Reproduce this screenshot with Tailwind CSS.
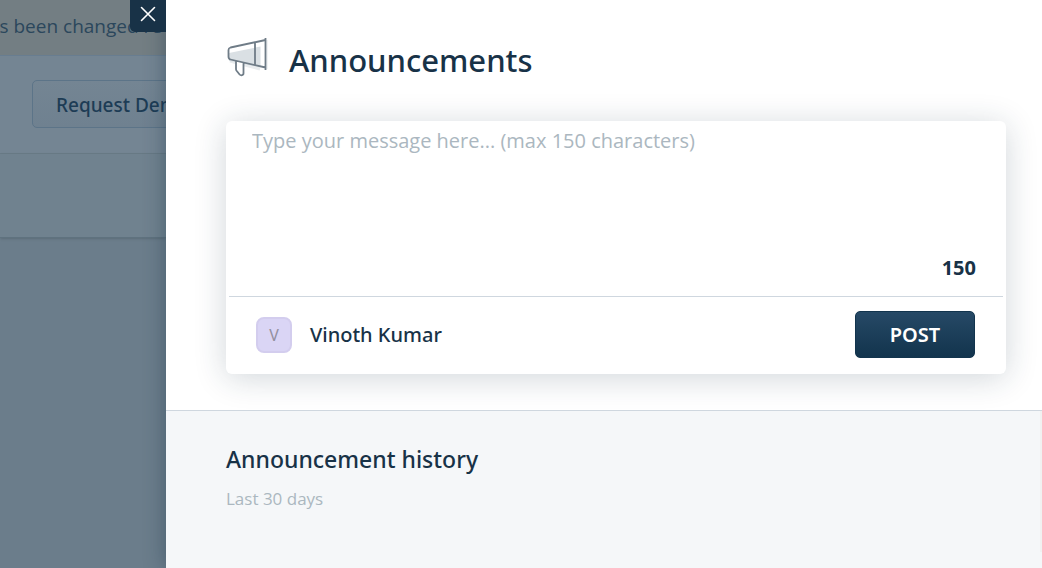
<!DOCTYPE html>
<html lang="en">
<head>
    <meta charset="UTF-8">
    <meta name="viewport" content="width=device-width, initial-scale=1.0">
    <title>Announcements</title>
    <script src="https://cdn.jsdelivr.net/npm/@tailwindcss/browser@4"></script>
</head>
<body class="flex min-h-screen overflow-x-hidden bg-[#6b7d8b] font-['Noto_Sans','Open_Sans',sans-serif] text-[#183247]">

    <!-- Dimmed page behind the drawer -->
    <div class="w-[166px] shrink-0 overflow-hidden whitespace-nowrap text-[19px] text-[#1d3c55]">
        <div class="flex h-14 items-center justify-end border-b border-[#687d90] bg-[#737e83]">
            <p class="pr-1 pb-0.5 font-['Open_Sans',sans-serif] text-[#2b475c]">Your plan has been changed re</p>
        </div>
        <div class="h-[98px] border-b border-[#697b87] bg-[#748593] py-6 pl-8">
            <button type="button" class="h-12 w-48 rounded-[5px] border border-[#5c7488] bg-linear-to-b from-[#748593] to-[#6f8190] pt-0.5 pl-[23px] text-left font-medium">Request Demo</button>
        </div>
        <div class="h-[84px] border-b border-[#5f727f] bg-[#70828f] shadow-sm"></div>
    </div>

    <!-- Drawer -->
    <main class="relative flex grow flex-col bg-white shadow-[0_0_20px_rgba(24,50,71,0.45)]">
        <button type="button" aria-label="Close" class="absolute top-0 right-full flex h-8 w-9 items-center justify-center rounded-bl-[5px] bg-[#183247]">
            <svg class="-mt-1 h-4 w-4" viewBox="0 0 16 16" fill="none" stroke="#fff" stroke-width="1.6" stroke-linecap="round">
                <path d="M1.5 1.5l13 13M14.5 1.5l-13 13"/>
            </svg>
        </button>

        <section class="px-9 pt-9 pb-9 pl-[60px]">
            <header class="mb-9 flex h-[49px] gap-[19px]">
                <svg class="h-11 w-11" viewBox="0 0 44 44" fill="none" stroke="#6f7c87" stroke-width="2" stroke-linejoin="round">
                    <path d="M4 25L34 33" stroke="#e9ecee" stroke-width="3"/>
                    <path d="M41 4v29" stroke="#e3e7ea" stroke-width="1"/>
                    <path d="M3 17l31.500-6.500v21L3 25z" fill="#dae0e4" stroke="none"/>
                    <path d="M11 26h6v12l-3 1-3-5z" fill="#fff" stroke="none"/>
                    <path d="M39.500 4L4.500 11.500Q2.500 12 2.500 14v6.500Q2.500 23 4.500 23.500L39.500 31.500M29 7v22M39.500 2v32M10 25v8q0 1 .6 1.800l3 3.700q.7.800 2 .8 1.900-.2 1.900-2V27" stroke-width="1.8"/>
                </svg>
                <h1 class="text-[31px] leading-[48px] font-medium">Announcements</h1>
            </header>

            <form class="rounded-md bg-white px-[3px] shadow-[0_4px_32px_rgba(24,50,71,0.2)]">
                <div class="border-b border-[#cfd7df] px-[23px] pt-1 pb-3">
                    <textarea aria-label="Message" maxlength="150" placeholder="Type your message here... (max 150 characters)" class="block h-[127px] w-full resize-none font-['Open_Sans',sans-serif] text-xl leading-8 outline-none placeholder:text-[#abb7c0]"></textarea>
                    <p class="pr-1 text-right text-xl leading-8 font-bold">150</p>
                </div>
                <div class="flex items-center justify-between pt-[14px] pr-7 pb-4 pl-[27px]">
                    <div class="flex items-center gap-[18px]">
                        <span class="flex h-9 w-9 items-center justify-center rounded-lg border-2 border-[#d3cdee] bg-[#dad5f5] text-base text-[#93909f]">V</span>
                        <span class="text-xl font-medium">Vinoth Kumar</span>
                    </div>
                    <button type="button" class="h-[47px] w-[120px] rounded-[5px] border border-[#12344d] bg-linear-to-b from-[#264966] to-[#12344d] text-xl font-semibold text-white">POST</button>
                </div>
            </form>
        </section>

        <section class="relative grow border-t border-[#cfd7df] bg-[#f5f7f9] px-[60px] py-8">
            <h2 class="text-[23px] leading-8 font-medium">Announcement history</h2>
            <p class="mt-2 font-['Open_Sans',sans-serif] text-[17px] leading-8 text-[#abb7c0]">Last 30 days</p>
            <!-- Scrollbar track -->
            <div class="absolute top-0 right-0 bottom-4 w-[2px] bg-[#f1f1f1]"></div>
        </section>
    </main>
</body>
</html>
